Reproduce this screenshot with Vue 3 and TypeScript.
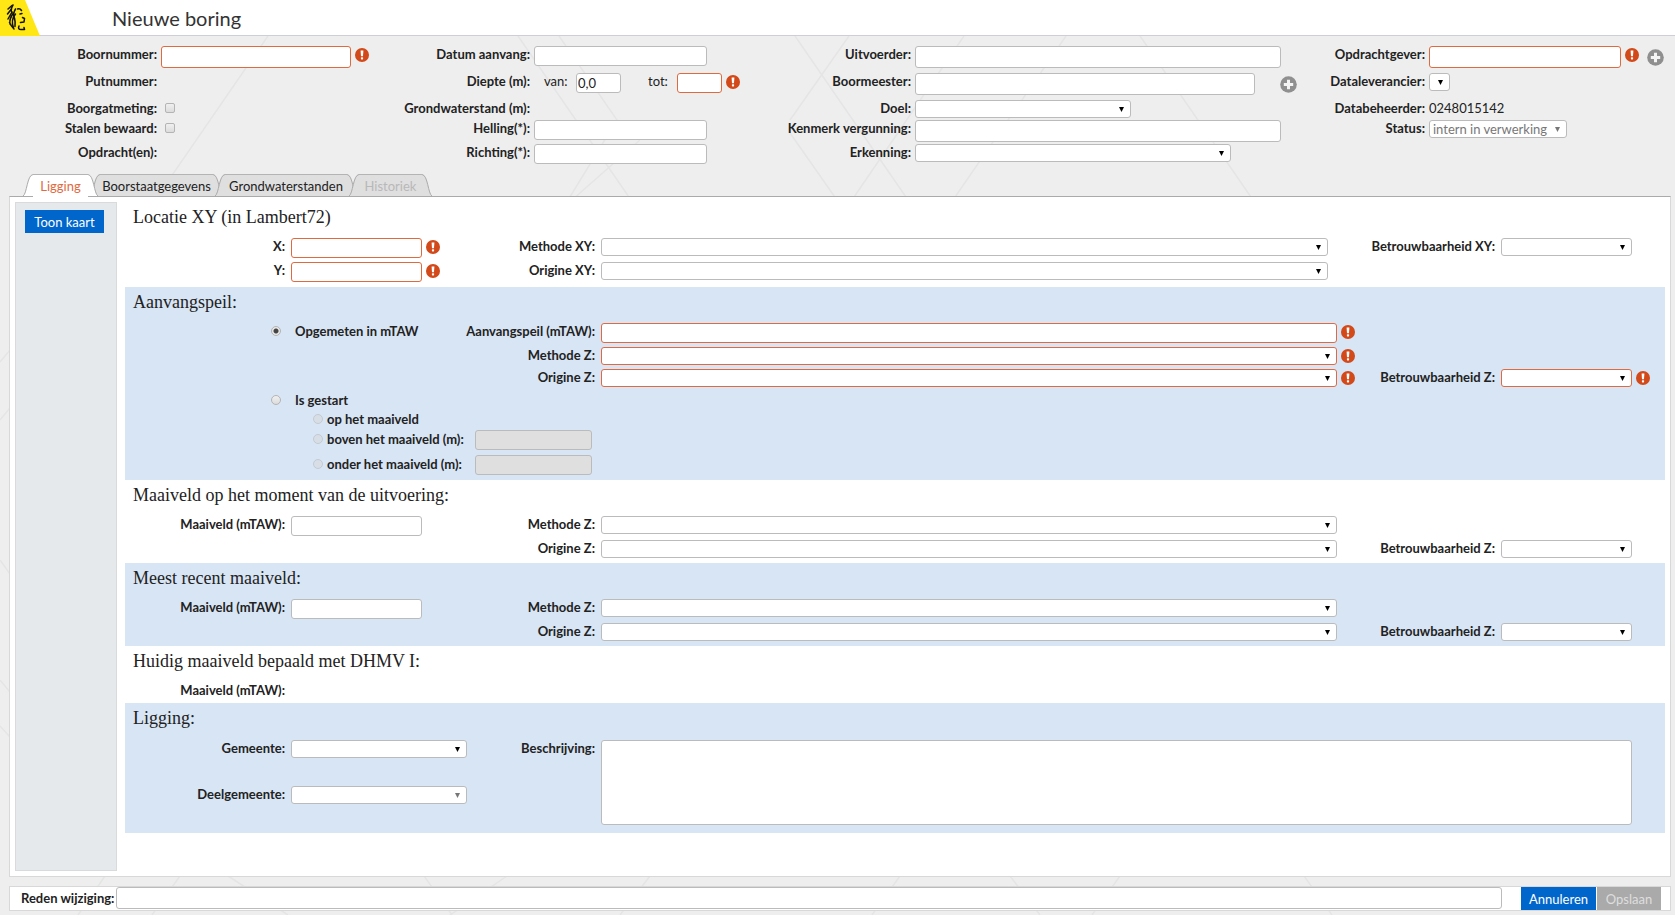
<script setup lang="ts">
import { ref } from 'vue'

type Kind = 'text' | 'select' | 'check' | 'none' | 'value' | 'depth' | 'status'

interface Field {
  id: string
  label: string
  kind: Kind
  size?: string
  required?: boolean
  add?: boolean
  value?: string
}

interface Group {
  name: string
  fields: Field[]
}

const groups: Group[] = [
  {
    name: 'boring',
    fields: [
      { id: 'boornummer', label: 'Boornummer:', kind: 'text', size: 'tall', required: true },
      { id: 'putnummer', label: 'Putnummer:', kind: 'none' },
      { id: 'boorgatmeting', label: 'Boorgatmeting:', kind: 'check' },
      { id: 'stalen', label: 'Stalen bewaard:', kind: 'check' },
      { id: 'opdrachten', label: 'Opdracht(en):', kind: 'none' },
    ],
  },
  {
    name: 'meting',
    fields: [
      { id: 'datum', label: 'Datum aanvang:', kind: 'text' },
      { id: 'diepte', label: 'Diepte (m):', kind: 'depth' },
      { id: 'grondwaterstand', label: 'Grondwaterstand (m):', kind: 'none' },
      { id: 'helling', label: 'Helling(*):', kind: 'text' },
      { id: 'richting', label: 'Richting(*):', kind: 'text' },
    ],
  },
  {
    name: 'uitvoering',
    fields: [
      { id: 'uitvoerder', label: 'Uitvoerder:', kind: 'text', size: 'tall' },
      { id: 'boormeester', label: 'Boormeester:', kind: 'text', size: 'tall', add: true },
      { id: 'doel', label: 'Doel:', kind: 'select', size: 'doel' },
      { id: 'kenmerk', label: 'Kenmerk vergunning:', kind: 'text', size: 'tall' },
      { id: 'erkenning', label: 'Erkenning:', kind: 'select', size: 'erkenning' },
    ],
  },
  {
    name: 'opdracht',
    fields: [
      { id: 'opdrachtgever', label: 'Opdrachtgever:', kind: 'text', size: 'tall', required: true, add: true },
      { id: 'dataleverancier', label: 'Dataleverancier:', kind: 'select', size: 'tiny' },
      { id: 'databeheerder', label: 'Databeheerder:', kind: 'value', value: '0248015142' },
      { id: 'status', label: 'Status:', kind: 'status', value: 'intern in verwerking' },
    ],
  },
]

const tabs = [
  { id: 'ligging', label: 'Ligging', disabled: false },
  { id: 'boorstaat', label: 'Boorstaatgegevens', disabled: false },
  { id: 'grondwater', label: 'Grondwaterstanden', disabled: false },
  { id: 'historiek', label: 'Historiek', disabled: true },
]
const activeTab = ref('ligging')

const levels = [
  { id: 'uitvoering', title: 'Maaiveld op het moment van de uitvoering:', tinted: false },
  { id: 'recent', title: 'Meest recent maaiveld:', tinted: true },
]

const depthFrom = ref('0,0')
const levelMode = ref('opgemeten')
</script>

<template>
  <div class="page">
    <svg class="sprite" width="0" height="0" aria-hidden="true">
      <symbol id="icon-error" viewBox="0 0 14 14">
        <circle cx="7" cy="7" r="7" fill="#d2491a" />
        <path d="M5.6 2.4h2.8L8 8.2H6z" fill="#fff" />
        <rect x="5.9" y="9.2" width="2.2" height="2.2" rx="0.6" fill="#fff" />
      </symbol>
      <symbol id="icon-add" viewBox="0 0 17 17">
        <circle cx="8.5" cy="8.5" r="8.3" fill="#8f8f8f" />
        <path d="M7 3.8h3V7h3.2v3H10v3.2H7V10H3.8V7H7z" fill="#f4f4f4" />
      </symbol>
    </svg>

    <svg class="pattern" width="1675" height="915" aria-hidden="true">
      <g fill="none" stroke="#e5e5e5" stroke-width="1.5">
        <path d="M268 36L155 200M518 36L631 200M559 36L617 120L565 205" />
        <path d="M640 140L572 200M795 36L908 200M849 36L790 120M790 133L837 200" />
        <path d="M964 36L852 200M1066 36L953 200M1140 36L1253 200" />
        <path d="M0 362L10 350M0 680L10 692M0 726L10 737M0 560L10 574M0 420L10 408" />
        <path d="M105 876L78 915M180 876L152 915M228 876L288 915M424 876L452 915M507 876L450 915M620 915L650 876" />
        <path d="M1304 876L1332 915M900 876L872 915M1010 876L1040 915M1120 876L1092 915" />
      </g>
    </svg>

    <header class="masthead">
      <svg class="logo" width="40" height="36" viewBox="0 0 40 36" role="img" aria-label="Vlaanderen">
        <path d="M0 0H25L40 36H0z" fill="#ffe615" />
        <g fill="none" stroke="#111" stroke-width="1.5" stroke-linecap="round" stroke-linejoin="round">
          <path d="M12 5.5L8 9M11.5 9L7.5 14M12 12L8 19M13.5 13Q9 19 10 24M15.500 14Q10.500 20 13.500 28M9.500 22.500Q11 26 14 29" />
          <path d="M13 5Q10 10 12 13M15.500 9Q12.500 14 14.500 18Q15.500 22 15 26.500" />
          <path d="M17.500 9Q20 8 21.500 10.500M20 14L22 13.500M22.500 17.500L24.500 18.500L24 22L20.500 22.500M19 26Q17.500 29.500 21 29.500L24.500 29.500L24 27.500" />
        </g>
      </svg>
      <h1>Nieuwe boring</h1>
    </header>

    <form class="summary" @submit.prevent>
      <div v-for="group in groups" :key="group.name" class="group" :class="group.name">
        <template v-for="field in group.fields" :key="field.id">
          <span v-if="['none', 'value', 'depth'].includes(field.kind)" class="label">{{ field.label }}</span>
          <label v-else class="label" :for="field.id">{{ field.label }}</label>

          <div class="field">
            <input v-if="field.kind === 'text'" :id="field.id" type="text" class="box" :class="[field.size, { invalid: field.required }]" />
            <span v-else-if="field.kind === 'select'" class="pick" :class="field.size">
              <select :id="field.id" class="box"><option></option></select>
            </span>
            <span v-else-if="field.kind === 'status'" class="pick status off">
              <select :id="field.id" class="box" disabled><option>{{ field.value }}</option></select>
            </span>
            <input v-else-if="field.kind === 'check'" :id="field.id" type="checkbox" class="tick" />
            <span v-else-if="field.kind === 'value'" class="value">{{ field.value }}</span>
            <template v-else-if="field.kind === 'depth'">
              <label class="range" for="diepte-van">van:</label>
              <input id="diepte-van" v-model="depthFrom" type="text" class="box short" />
              <label class="range to" for="diepte-tot">tot:</label>
              <input id="diepte-tot" type="text" class="box short invalid" />
            </template>
            <svg v-if="field.required || field.kind === 'depth'" class="error" role="img" aria-label="Verplicht"><use href="#icon-error" /></svg>
            <button v-if="field.add" type="button" class="add" aria-label="Toevoegen"><svg><use href="#icon-add" /></svg></button>
          </div>
        </template>
      </div>
    </form>

    <nav class="tabs" role="tablist">
      <button
        v-for="tab in tabs"
        :key="tab.id"
        type="button"
        role="tab"
        class="tab"
        :class="[tab.id, { active: tab.id === activeTab }]"
        :aria-selected="tab.id === activeTab"
        :disabled="tab.disabled"
        @click="activeTab = tab.id"
      >
        <svg class="edge" viewBox="0 0 10 22" aria-hidden="true"><path class="fill" d="M0 22C4 20 4 1 10 0V22z" /><path class="line" d="M0 22C4 20 4 1 10 .5" /></svg>
        <span class="tab-text">{{ tab.label }}</span>
        <svg class="edge" viewBox="0 0 10 22" aria-hidden="true"><path class="fill" d="M0 0C6 1 6 20 10 22H0z" /><path class="line" d="M0 .5C6 1 6 20 10 22" /></svg>
      </button>
    </nav>

    <main class="panel">
      <aside class="side">
        <button type="button" class="primary map">Toon kaart</button>
      </aside>

      <div class="content">
        <section>
          <h2>Locatie XY (in Lambert72)</h2>
          <div class="grid">
            <label class="label" for="x">X:</label>
            <div class="field"><input id="x" type="text" class="box coord invalid" /><svg class="error" role="img" aria-label="Verplicht"><use href="#icon-error" /></svg></div>
            <label class="label" for="methode-xy">Methode XY:</label>
            <div class="field slot wide"><span class="pick"><select id="methode-xy" class="box"><option></option></select></span></div>
            <label class="label" for="trust-xy">Betrouwbaarheid XY:</label>
            <div class="field slot"><span class="pick"><select id="trust-xy" class="box"><option></option></select></span></div>

            <label class="label" for="y">Y:</label>
            <div class="field"><input id="y" type="text" class="box coord invalid" /><svg class="error" role="img" aria-label="Verplicht"><use href="#icon-error" /></svg></div>
            <label class="label" for="origine-xy">Origine XY:</label>
            <div class="field slot wide"><span class="pick"><select id="origine-xy" class="box"><option></option></select></span></div>
          </div>
        </section>

        <section class="tinted">
          <h2>Aanvangspeil:</h2>
          <div class="grid start">
            <label class="option"><input v-model="levelMode" type="radio" name="niveau" value="opgemeten" class="dot" />Opgemeten in mTAW</label>
            <label class="label" for="peil">Aanvangspeil (mTAW):</label>
            <div class="field"><input id="peil" type="text" class="box grow invalid" /><svg class="error" role="img" aria-label="Verplicht"><use href="#icon-error" /></svg></div>

            <label class="label third" for="start-methode">Methode Z:</label>
            <div class="field"><span class="pick"><select id="start-methode" class="box invalid"><option></option></select></span><svg class="error" role="img" aria-label="Verplicht"><use href="#icon-error" /></svg></div>

            <label class="label third" for="start-origine">Origine Z:</label>
            <div class="field"><span class="pick"><select id="start-origine" class="box invalid"><option></option></select></span><svg class="error" role="img" aria-label="Verplicht"><use href="#icon-error" /></svg></div>
            <label class="label" for="start-trust">Betrouwbaarheid Z:</label>
            <div class="field"><span class="pick"><select id="start-trust" class="box invalid"><option></option></select></span><svg class="error" role="img" aria-label="Verplicht"><use href="#icon-error" /></svg></div>
          </div>
          <label class="option"><input v-model="levelMode" type="radio" name="niveau" value="gestart" class="dot" />Is gestart</label>
          <label class="option sub"><input type="radio" name="maaiveld" class="dot" disabled />op het maaiveld</label>
          <div class="offset">
            <label class="option sub"><input type="radio" name="maaiveld" class="dot" disabled />boven het maaiveld (m):</label>
            <input type="text" class="box" disabled aria-label="Meter boven het maaiveld" />
          </div>
          <div class="offset">
            <label class="option sub"><input type="radio" name="maaiveld" class="dot" disabled />onder het maaiveld (m):</label>
            <input type="text" class="box" disabled aria-label="Meter onder het maaiveld" />
          </div>
        </section>

        <section v-for="level in levels" :key="level.id" class="level" :class="{ tinted: level.tinted }">
          <h2>{{ level.title }}</h2>
          <div class="grid">
            <label class="label" :for="level.id + '-peil'">Maaiveld (mTAW):</label>
            <div class="field"><input :id="level.id + '-peil'" type="text" class="box coord" /></div>
            <label class="label" :for="level.id + '-methode'">Methode Z:</label>
            <div class="field slot"><span class="pick"><select :id="level.id + '-methode'" class="box"><option></option></select></span></div>

            <label class="label third" :for="level.id + '-origine'">Origine Z:</label>
            <div class="field slot"><span class="pick"><select :id="level.id + '-origine'" class="box"><option></option></select></span></div>
            <label class="label" :for="level.id + '-trust'">Betrouwbaarheid Z:</label>
            <div class="field slot"><span class="pick"><select :id="level.id + '-trust'" class="box"><option></option></select></span></div>
          </div>
        </section>

        <section class="current">
          <h2>Huidig maaiveld bepaald met DHMV I:</h2>
          <div class="grid"><span class="label">Maaiveld (mTAW):</span></div>
        </section>

        <section class="tinted place">
          <h2>Ligging:</h2>
          <div class="grid">
            <label class="label" for="gemeente">Gemeente:</label>
            <div class="field"><span class="pick"><select id="gemeente" class="box"><option></option></select></span></div>
            <label class="label" for="beschrijving">Beschrijving:</label>
            <textarea id="beschrijving" class="box"></textarea>
            <label class="label" for="deelgemeente">Deelgemeente:</label>
            <div class="field"><span class="pick off"><select id="deelgemeente" class="box" disabled><option></option></select></span></div>
          </div>
        </section>
      </div>
    </main>

    <footer class="actions">
      <label class="label" for="reden">Reden wijziging:</label>
      <input id="reden" type="text" class="box tall" />
      <button type="button" class="primary">Annuleren</button>
      <button type="button" class="primary" disabled>Opslaan</button>
    </footer>
  </div>
</template>

<style>
body {
  margin: 0;
  background: #eee;
}
</style>

<style scoped>
.page {
  position: relative;
  display: flex;
  flex-direction: column;
  min-height: 100vh;
  box-sizing: border-box;
  padding-bottom: 4px;
  font: 13px/16px Lato, "Open Sans", sans-serif;
  color: #222;
  overflow: hidden;
}
.sprite,
.pattern {
  position: absolute;
  top: 0;
  left: 0;
}
.masthead,
.summary,
.tabs,
.panel,
.actions {
  position: relative;
}
input,
select,
textarea,
button {
  box-sizing: border-box;
  margin: 0;
  font: inherit;
  color: inherit;
}
.masthead {
  display: flex;
  height: 35px;
  background: #fff;
  border-bottom: 1px solid #cdced8;
}
.logo {
  flex: none;
}
h1 {
  margin: 0 0 0 72px;
  font-size: 20px;
  font-weight: 400;
  line-height: 36px;
  color: #333;
}

/* boxes shared by all fields */
.box {
  display: block;
  height: 20px;
  padding: 0 2px;
  border: 1px solid #bbb;
  border-radius: 3px;
  background: #fff;
}
.box.tall {
  height: 22px;
}
.box.invalid {
  border-color: #df6a41;
}
.box:disabled {
  background: #dfdfdf;
}
.box.grow {
  flex: 1;
  min-width: 0;
}
.pick {
  position: relative;
  flex: 1;
  min-width: 0;
}
.pick .box {
  width: 100%;
  height: 18px;
  appearance: none;
  background: #fff;
  opacity: 1;
}
.pick::after {
  content: "";
  position: absolute;
  top: 7px;
  right: 7px;
  width: 5px;
  height: 5px;
  background: #000;
  clip-path: polygon(0 0, 100% 0, 50% 100%);
}
.pick.off::after {
  background: #777;
}
.label {
  justify-self: end;
  font-weight: 700;
  white-space: nowrap;
}
.field {
  display: flex;
  align-items: flex-start;
  min-width: 0;
}
.error {
  flex: none;
  width: 14px;
  height: 14px;
  margin: 2px 0 0 4px;
}
.add {
  flex: none;
  height: 17px;
  padding: 0;
  border: 0;
  background: none;
}
.add svg {
  display: block;
  width: 17px;
  height: 17px;
}
.tick,
.dot {
  appearance: none;
  flex: none;
  width: 10px;
  height: 10px;
  border: 1px solid #b4b4b4;
  background: linear-gradient(#f0f0f0, #dcdcdc);
}
.tick {
  border-radius: 2px;
  margin: 3px 0 0 4px;
}
.dot {
  border-radius: 50%;
}
.dot:checked {
  background: radial-gradient(circle, #444 0 2px, #e8e8e8 3px);
}
.dot:disabled {
  border-color: #c4cad2;
  background: #d8dee6;
}

/* summary form */
.summary {
  display: grid;
  grid-template-columns: 375fr 385fr 540fr 375fr;
  padding: 10px 0 6px;
}
.group {
  display: grid;
  grid-template-columns: 157px minmax(0, 1fr);
  grid-template-rows: 27px 27px 20px 24px 24px;
  column-gap: 4px;
}
.group.meting {
  grid-template-columns: 155px minmax(0, 1fr);
}
.group.uitvoering {
  grid-template-columns: 151px minmax(0, 1fr);
}
.group.opdracht {
  grid-template-columns: 125px minmax(0, 1fr);
}
.boring .box {
  width: 190px;
}
.meting .box {
  width: 173px;
}
.meting .box.short {
  width: 45px;
  padding: 0 1px;
}
.uitvoering .field {
  padding-right: 3px;
}
.uitvoering .box.tall {
  flex: 1;
  margin-right: 16px;
}
.uitvoering .box.tall:has(+ .add) {
  margin-right: 25px;
}
.uitvoering .add {
  margin-top: 3px;
}
.pick.doel {
  flex: 0 1 216px;
}
.pick.erkenning {
  flex: 0 1 316px;
}
.pick.tiny {
  flex: 0 0 21px;
}
.opdracht .box.tall {
  flex: 1;
  min-width: 0;
}
.opdracht .add {
  margin: 3px 11px 0 8px;
}
.pick.status {
  flex: 0 0 138px;
}
.pick.status .box {
  padding-left: 3px;
  color: #777;
}
.range {
  width: 25px;
  margin: 0 7px 0 10px;
}
.range.to {
  width: 22px;
  margin: 0 7px 0 27px;
}

/* tabs */
.tabs {
  display: flex;
  height: 22px;
  padding-left: 23px;
}
.tab {
  display: flex;
  padding: 0;
  border: 0;
  background: none;
  height: 22px;
  line-height: 23px;
}
.tab + .tab {
  margin-left: -8px;
}
.tab .edge {
  flex: none;
  width: 10px;
  height: 22px;
}
.tab .fill {
  fill: #dfdfdf;
}
.tab .line {
  fill: none;
  stroke: #aaa;
}
.tab-text {
  flex: 1;
  height: 21px;
  border-top: 1px solid #b4b4b4;
  background: #dfdfdf;
  text-align: center;
}
.tab.ligging {
  width: 75px;
}
.tab.boorstaat {
  width: 133px;
}
.tab.grondwater {
  width: 142px;
}
.tab.historiek {
  width: 83px;
}
.tab.active {
  z-index: 1;
  color: #df6a41;
}
.tab.active .fill {
  fill: #fff;
}
.tab.active .tab-text {
  height: 22px;
  background: #fff;
}
.tab:disabled {
  color: #b8b8b8;
}

/* panel */
.panel {
  flex: 1;
  display: flex;
  gap: 8px;
  margin: 0 4px 9px 9px;
  padding: 5px;
  border: 1px solid #d8d8d8;
  border-top-color: #aaa;
  background: #fff;
}
.side {
  flex: none;
  box-sizing: border-box;
  width: 102px;
  padding: 7px 9px;
  border: 1px solid #d8dadb;
  background: #e5e9ec;
}
.primary {
  padding: 0;
  border: 0;
  background: #06c;
  color: #fff;
  line-height: 22px;
}
.primary:disabled {
  background: #aaa;
  color: #dedede;
}
.map {
  display: block;
  width: 79px;
  height: 23px;
}
.content {
  flex: 1;
  min-width: 0;
}
section {
  box-sizing: border-box;
  padding-bottom: 1px;
}
.tinted {
  background: #d8e5f4;
}
h2 {
  margin: 0;
  padding: 3px 0 9px 8px;
  font: 18px/24px "Liberation Serif", serif;
}
.grid {
  display: grid;
  grid-template-columns: 160px 176px 122px minmax(0, 1fr) 134px 149px;
  grid-auto-rows: 24px;
  column-gap: 6px;
  padding-right: 15px;
}
.coord {
  width: 131px;
}
.slot {
  padding-right: 18px;
}
.slot.wide {
  padding-right: 27px;
}
.third {
  grid-column: 3;
}
.level .grid {
  grid-template-rows: 24px 22px;
}
.grid.start {
  grid-template-rows: 24px 22px 21px;
}
.option {
  display: flex;
  align-items: center;
  gap: 14px;
  height: 20px;
  padding-left: 146px;
  font-weight: 700;
}
.grid .option {
  grid-column: 1 / 3;
  height: 16px;
}
.option.sub {
  gap: 4px;
  padding-left: 188px;
}
.offset {
  display: flex;
  align-items: flex-end;
  height: 24px;
}
.offset:first-of-type {
  margin-top: 0;
}
.offset .option {
  flex: none;
  align-self: flex-start;
  width: 154px;
}
.offset .box {
  width: 117px;
  margin: 0 0 3px 8px;
}
.start + .option {
  height: 19px;
}
.option.sub + .offset {
  height: 25px;
}
.offset:last-child {
  height: 25px;
}
.offset:last-child .box {
  margin-bottom: 4px;
}
.option.sub + .offset .box {
  margin-bottom: 4px;
}
.current .grid {
  grid-auto-rows: 20px;
}
.place h2 {
  padding-bottom: 10px;
}
.place .grid {
  grid-template-rows: 46px 46px;
}
.place textarea {
  grid-area: 1 / 4 / 3 / 7;
  width: auto;
  height: 85px;
  margin-right: 18px;
  resize: none;
}

/* action bar */
.actions {
  display: flex;
  margin: 0 4px 0 9px;
  padding: 0 9px 0 11px;
  border: 1px solid #d8d8d8;
  background: #fff;
}
.actions .label {
  flex: none;
  width: 95px;
  line-height: 23px;
}
.actions .box {
  flex: 1;
  margin: 0 19px 1px 0;
}
.actions .primary {
  width: 75px;
  height: 23px;
}
.actions .primary:disabled {
  width: 64px;
  margin-left: 1px;
}
</style>
